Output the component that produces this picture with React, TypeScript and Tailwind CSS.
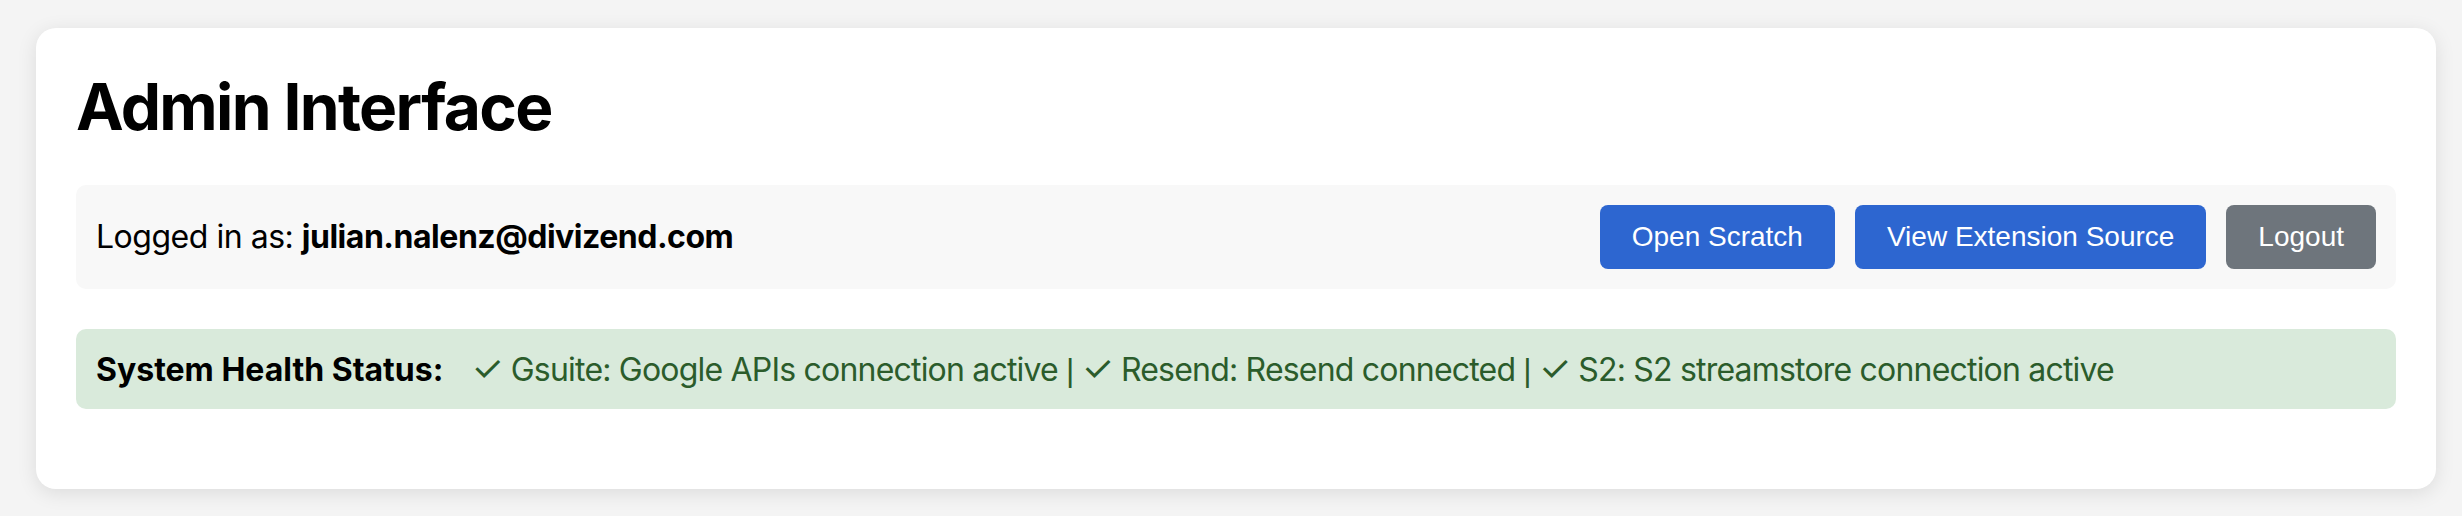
export default function App() {
  const services = [
    "Gsuite: Google APIs connection active",
    "Resend: Resend connected",
    "S2: S2 streamstore connection active",
  ];

  return (
    <div className="min-h-screen bg-[#f4f4f4] pl-[36px] pt-[28px] font-[Inter,'Noto_Sans',sans-serif]">
      <div className="w-[2400px] rounded-[20px] bg-white p-[40px] shadow-[0_4px_20px_rgba(0,0,0,0.1)]">
        <h1 className="mb-[40px] text-[64px] font-bold leading-[77px] tracking-[-0.026em] text-black">
          Admin Interface
        </h1>

        <div className="mb-[40px] flex h-[104px] items-center justify-between rounded-[10px] bg-[#f8f8f8] px-[20px]">
          <div className="text-[32px] leading-[38px] tracking-[-0.015em] text-black">
            Logged in as: <strong className="font-bold">julian.nalenz@divizend.com</strong>
          </div>
          <div className="flex gap-[20px] font-['Liberation_Sans',Arial,sans-serif] text-[28px] text-white">
            <button className="h-[64px] rounded-[8px] bg-[#2d66d0] px-[32px]">
              Open Scratch
            </button>
            <button className="h-[64px] rounded-[8px] bg-[#2d66d0] px-[32px]">
              View Extension Source
            </button>
            <button className="h-[64px] rounded-[8px] bg-[#6e757c] px-[32px]">
              Logout
            </button>
          </div>
        </div>

        <div className="mb-[40px] rounded-[10px] bg-[#d9eadb] p-[20px] text-[32px] leading-[38px]">
          <strong className="font-bold text-black">System Health Status:</strong>
          <span className="ml-[20px] tracking-[-0.025em] text-[#2b5c2b]">
            {" "}
            {services.map((s, i) => (
              <span key={s}>
                {i > 0 && (
                  <span className="font-['Liberation_Sans',sans-serif]"> | </span>
                )}
                <span className="text-[36px] leading-[38px]">✓</span> {s}
              </span>
            ))}
          </span>
        </div>
      </div>
    </div>
  );
}
